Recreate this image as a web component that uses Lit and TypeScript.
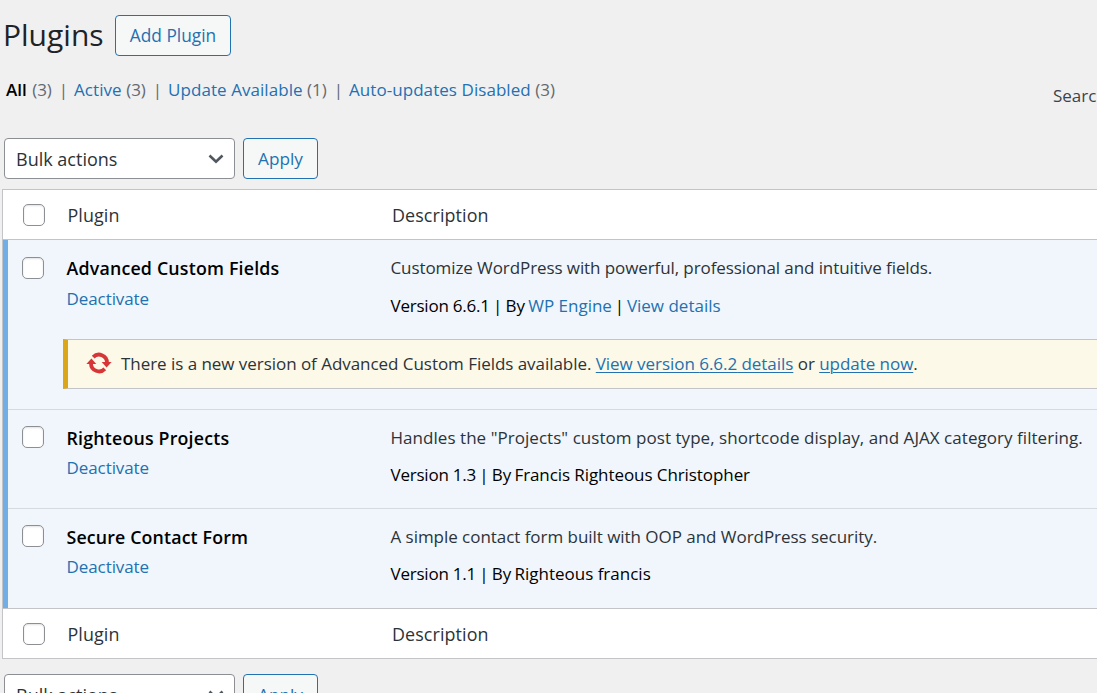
import { LitElement, html, css, nothing } from "lit";
import { customElement, property } from "lit/decorators.js";

interface Plugin {
  key: string;
  name: string;
  description: string;
  version: string;
  author: string;
  linked?: boolean;
  update?: string;
}

const PLUGINS: Plugin[] = [
  {
    key: "acf",
    name: "Advanced Custom Fields",
    description: "Customize WordPress with powerful, professional and intuitive fields.",
    version: "6.6.1",
    author: "WP Engine",
    linked: true,
    update: "6.6.2",
  },
  {
    key: "projects",
    name: "Righteous Projects",
    description: 'Handles the "Projects" custom post type, shortcode display, and AJAX category filtering.',
    version: "1.3",
    author: "Francis Righteous Christopher",
  },
  {
    key: "contact",
    name: "Secure Contact Form",
    description: "A simple contact form built with OOP and WordPress security.",
    version: "1.1",
    author: "Righteous francis",
  },
];

@customElement("wp-bulk-actions")
export class WpBulkActions extends LitElement {
  static styles = css`
    :host { display: flex; gap: 8px; height: 41px; }
    .select, .apply {
      box-sizing: border-box; height: 41px; border-radius: 4px;
      display: flex; align-items: center; white-space: nowrap;
    }
    .select {
      width: 231px; border: 1px solid #8c8f94; background: #fff; color: #2c3338;
      padding: 0 9px 0 11px; justify-content: space-between; font-size: 18px;
    }
    .apply {
      width: 75px; border: 1px solid #2271b1; background: #f6f7f7; color: #2271b1;
      justify-content: center; font-size: 17.2px;
    }
    svg { width: 18px; height: 18px; }
  `;
  render() {
    return html`
      <div class="select">
        <span>Bulk actions</span>
        <svg viewBox="0 0 18 18" fill="none" stroke="#50575e" stroke-width="2.6">
          <path d="M2.5 5.5 L9 11.8 L15.5 5.5" />
        </svg>
      </div>
      <div class="apply">Apply</div>
    `;
  }
}

@customElement("wp-checkbox")
export class WpCheckbox extends LitElement {
  static styles = css`
    :host {
      display: block; box-sizing: border-box; width: 22px; height: 22px;
      border: 1px solid #8c8f94; border-radius: 5px; background: #fff;
      box-shadow: inset 0 1px 2px rgba(0, 0, 0, 0.12);
    }
  `;
  render() {
    return nothing;
  }
}

@customElement("wp-plugin-row")
export class WpPluginRow extends LitElement {
  @property({ attribute: false }) plugin!: Plugin;

  static styles = css`
    :host { display: flow-root; white-space: nowrap; background: #f0f6fc; }
    .cells { display: grid; grid-template-columns: 58.5px 324px 1fr; height: 99px; }
    .cells.projects { height: 98px; }
    wp-checkbox { margin: 16px 0 0 14px; }
    .acf wp-checkbox { margin-top: 17px; }
    .name { color: #000; font-weight: 600; font-size: 17.8px; letter-spacing: 0.19px; line-height: 24px; margin-top: 16px; }
    .contact .name { letter-spacing: 0.14px; }
    .action { line-height: 24px; margin-top: 6px; letter-spacing: -0.08px; }
    .acf .action { margin-top: 7px; }
    .desc { line-height: 24px; margin-top: 16px; color: #2c3338; }
    .acf .desc { letter-spacing: -0.09px; }
    .projects .desc { letter-spacing: 0.045px; }
    .contact .desc { letter-spacing: -0.04px; }
    .meta { line-height: 24px; margin-top: 13px; color: #000; }
    .acf .meta { margin-top: 14px; }
    .version { letter-spacing: -0.22px; }
    .join { word-spacing: -1.25px; }
    .join.wide { word-spacing: -1.6px; }
    .projects .author { letter-spacing: -0.08px; }
    .link { color: #2271b1; }
    .notice {
      box-sizing: border-box; height: 50px; margin: 0 0 20px 55px;
      border: 1px solid #c3c4c7; border-left: 5px solid #dba617; border-right: 0;
      background: #fcf9e8; color: #2c3338; display: flex; align-items: center; padding-left: 18px;
      letter-spacing: -0.043px;
    }
    .notice svg { width: 26px; height: 24px; margin-right: 9px; margin-top: -2px; }
    .notice .message { margin-top: -2px; }
    .notice .link { text-decoration: underline; text-underline-offset: 2px; text-decoration-thickness: 1px; }
  `;
  render() {
    const p = this.plugin;
    return html`
      <div class="cells ${p.key}">
        <div><wp-checkbox></wp-checkbox></div>
        <div>
          <div class="name">${p.name}</div>
          <div class="action link">Deactivate</div>
        </div>
        <div>
          <div class="desc">${p.description}</div>
          <div class="meta"><span class="version">Version ${p.version}</span><span class="join"> | By </span>${p.linked
            ? html`<span class="author link">${p.author}</span><span class="join wide"> | </span><span class="link">View details</span>`
            : html`<span class="author">${p.author}</span>`}</div>
        </div>
      </div>
      ${p.update
        ? html`<div class="notice">
            <svg viewBox="0 0 26 24" fill="none" stroke="#d63638" stroke-width="3.8">
              <path d="M7.2 6.1 A8 8 0 0 1 21 11.5" />
              <path d="M18.8 17.9 A8 8 0 0 1 5 12.5" />
              <path d="M15.7 11 H25.6 L20.6 16.6 Z" fill="#d63638" stroke="none" />
              <path d="M.4 13 H10.3 L5.4 7.4 Z" fill="#d63638" stroke="none" />
            </svg>
            <span class="message">There is a new version of ${p.name} available.
              <span class="link">View version ${p.update} details</span> or
              <span class="link">update now</span>.</span>
          </div>`
        : nothing}
    `;
  }
}

@customElement("app-root")
export class AppRoot extends LitElement {
  static styles = css`
    :host {
      display: block; box-sizing: border-box; width: 100%; height: 693px; overflow: hidden;
      background: #f0f0f1; color: #2c3338;
      font-family: "Open Sans", "Noto Sans", sans-serif; font-size: 17px; white-space: nowrap;
    }
    .head { display: flex; align-items: center; height: 41px; padding: 15px 0 0 3px; }
    h1 { margin: -2px 0 0; width: 112px; font-weight: 400; font-size: 30px; line-height: 40px; color: #1d2327; }
    .add {
      box-sizing: border-box; width: 116px; height: 41px; border: 1px solid #2271b1; border-radius: 4px;
      background: #f6f7f7; color: #2271b1; display: flex; align-items: center; justify-content: center;
      font-size: 17.3px; padding-bottom: 1px;
    }
    .filters { display: flex; justify-content: space-between; height: 82px; line-height: 24px; }
    .views { padding: 22px 0 0 6px; color: #646970; }
    .views b { font-weight: 600; color: #000; margin-right: 1px; }
    .link { color: #2271b1; }
    .views .link { letter-spacing: 0.06px; }
    .bar { color: #646970; margin: 0 1.6px 0 2.4px; }
    .search { width: 44px; padding-top: 28px; overflow: hidden; color: #3c434a; }
    wp-bulk-actions { margin-left: 4px; }
    .table { margin: 10px 0 15px 2px; border: 1px solid #c3c4c7; border-right: 0; background: #fff; }
    .labels {
      display: grid; grid-template-columns: 64.5px 324.5px 1fr; align-items: center;
      height: 49px; font-size: 17.9px; letter-spacing: 0.1px;
    }
    .labels wp-checkbox { margin-left: 20px; }
    .body { border: 1px solid #c3c4c7; border-width: 1px 0; }
    .rows { border-left: 5px solid #72aee6; }
    wp-plugin-row + wp-plugin-row { border-top: 1px solid #d5dade; }
  `;

  private labels() {
    return html`<div class="labels">
      <wp-checkbox></wp-checkbox><span>Plugin</span><span>Description</span>
    </div>`;
  }

  render() {
    return html`
      <div class="head"><h1>Plugins</h1><div class="add">Add Plugin</div></div>
      <div class="filters">
        <div class="views">
          <b>All</b> (3) <span class="bar">|</span>
          <span class="link">Active</span> (3) <span class="bar">|</span>
          <span class="link">Update Available</span> (1) <span class="bar">|</span>
          <span class="link">Auto-updates Disabled</span> (3)
        </div>
        <div class="search">Search</div>
      </div>
      <wp-bulk-actions></wp-bulk-actions>
      <div class="table">
        ${this.labels()}
        <div class="body"><div class="rows">
          ${PLUGINS.map((p) => html`<wp-plugin-row .plugin=${p}></wp-plugin-row>`)}
        </div></div>
        ${this.labels()}
      </div>
      <wp-bulk-actions></wp-bulk-actions>
    `;
  }
}
